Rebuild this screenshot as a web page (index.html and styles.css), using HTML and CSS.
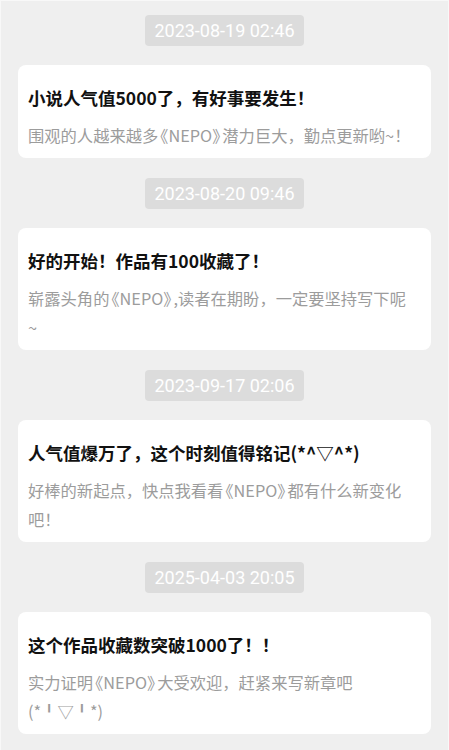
FILE: index.html
```html
<!DOCTYPE html>
<html lang="zh-CN">
<head>
    <meta charset="UTF-8">
    <meta name="viewport" content="width=device-width, initial-scale=1.0">
    <title>作品消息</title>
    <link rel="stylesheet" href="styles.css">
</head>
<body>

<div class="page">
    <!-- 人气值 5000 -->
    <div class="time-row"><span class="time">2023-08-19 02:46</span></div>
    <div class="card">
        <h3 class="card-title">小说人气值5000了，有好事要发生！</h3>
        <p class="card-text">围观的人越来越多<span class="book">《NEPO》</span>潜力巨大，勤点更新哟~！</p>
    </div>

    <!-- 收藏 100 -->
    <div class="time-row"><span class="time">2023-08-20 09:46</span></div>
    <div class="card">
        <h3 class="card-title">好的开始！作品有100收藏了！</h3>
        <p class="card-text">崭露头角的<span class="book">《NEPO》</span>,读者在期盼，一定要坚持写下呢~</p>
    </div>

    <!-- 人气值破万 -->
    <div class="time-row"><span class="time">2023-09-17 02:06</span></div>
    <div class="card">
        <h3 class="card-title">人气值爆万了，这个时刻值得铭记(*^▽^*)</h3>
        <p class="card-text">好棒的新起点，快点我看看<span class="book">《NEPO》</span>都有什么新变化吧！</p>
    </div>

    <!-- 收藏 1000 -->
    <div class="time-row"><span class="time">2025-04-03 20:05</span></div>
    <div class="card">
        <h3 class="card-title">这个作品收藏数突破1000了！！</h3>
        <p class="card-text">实力证明<span class="book">《NEPO》</span>大受欢迎，赶紧来写新章吧<span class="nowrap">(*╹▽╹*)</span></p>
    </div>
</div>

</body>
</html>
```

FILE: styles.css
```css
body {
    margin: 0;
    padding: 0;
    background-color: #efefef;
    font-family: "Noto Sans CJK SC", "Noto Sans", sans-serif;
}

.page {
    min-height: 750px;
    box-sizing: border-box;
    padding: 14px 17px 0 17px;
    border: 1px solid #f8f8f8;
    border-bottom: none;
}

/* Time stamp pill */
.time-row {
    display: flex;
    justify-content: center;
    margin-bottom: 19px;
}

.time {
    display: inline-block;
    height: 31px;
    line-height: 31px;
    padding: 0 9px;
    background-color: #dcdcdc;
    color: #fff;
    font-family: Roboto, sans-serif;
    font-size: 18px;
    border-radius: 4px;
}

/* Message card */
.card {
    background-color: #fff;
    border-radius: 8px;
    padding: 20px 20px 8px 10px;
    margin-bottom: 20px;
}

.card-title {
    margin: 0;
    font-size: 17.5px;
    line-height: 26px;
    font-weight: bold;
    color: #111;
}

.card-text {
    margin: 10px 0 0 0;
    font-size: 16.3px;
    line-height: 29px;
    color: #9c9c9c;
}

/* book name brackets are set half width */
.book {
    font-feature-settings: "halt";
    padding: 0 2px;
}

.nowrap {
    white-space: nowrap;
}
```
